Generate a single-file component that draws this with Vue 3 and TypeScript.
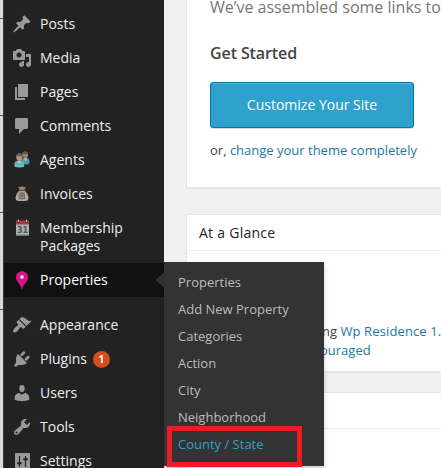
<script setup lang="ts">
interface MenuItem {
  label: string
  icon: string
  badge?: number
  current?: boolean
  separated?: boolean
  tall?: boolean
}

const menu: MenuItem[] = [
  { label: 'Posts', icon: 'pin' },
  { label: 'Media', icon: 'media' },
  { label: 'Pages', icon: 'pages' },
  { label: 'Comments', icon: 'comment' },
  { label: 'Agents', icon: 'agents' },
  { label: 'Invoices', icon: 'bag' },
  { label: 'Membership Packages', icon: 'calendar', tall: true },
  { label: 'Properties', icon: 'marker', current: true },
  { label: 'Appearance', icon: 'brush', separated: true },
  { label: 'Plugins', icon: 'plug', badge: 1 },
  { label: 'Users', icon: 'user' },
  { label: 'Tools', icon: 'wrench' },
  { label: 'Settings', icon: 'sliders' },
]

const submenu: string[] = [
  'Properties',
  'Add New Property',
  'Categories',
  'Action',
  'City',
  'Neighborhood',
  'County / State',
]
</script>

<template>
  <div class="screen">
    <div class="edge"><i v-for="n in 4" :key="n"></i></div>
    <nav class="sidebar">
      <a
        v-for="item in menu"
        :key="item.label"
        class="item"
        :class="{ current: item.current, separated: item.separated, tall: item.tall }"
      >
        <svg class="icon" viewBox="0 0 20 20" width="20" height="20">
          <path v-if="item.icon === 'pin'" d="M10.44 3.02l1.82-1.82 6.36 6.35-1.83 1.82c-1.05-.68-2.48-.57-3.41.36l-.75.75c-.92.93-1.04 2.35-.35 3.41l-1.83 1.82-2.41-2.41-2.8 2.79c-.42.42-3.38 2.71-3.8 2.29s1.86-3.39 2.28-3.81l2.79-2.79L4.1 9.36l1.83-1.82c1.05.69 2.48.57 3.4-.36l.75-.75c.93-.92 1.05-2.35.36-3.41z" />
          <path v-else-if="item.icon === 'media'" fill-rule="evenodd" d="M13 11V4c0-.55-.45-1-1-1h-1.67L9 1H5L3.67 3H2c-.55 0-1 .45-1 1v7c0 .55.45 1 1 1h10c.55 0 1-.45 1-1zM7 4.5c1.380 0 2.500 1.120 2.500 2.500S8.380 9.500 7 9.500 4.500 8.380 4.500 7 5.620 4.500 7 4.500zM14 6h5v10.500c0 1.380-1.120 2.500-2.500 2.500S14 17.880 14 16.500s1.120-2.500 2.500-2.500c.170 0 .340.020.500.050V9h-3V6zm-4 8.050V13h2v3.500c0 1.380-1.120 2.500-2.500 2.500S7 17.880 7 16.500 8.120 14 9.500 14c.170 0 .340.020.500.050z" />
          <path v-else-if="item.icon === 'pages'" d="M6 15V2h10v13H6zm-1 1h8v2H3V5h2v11z" />
          <path v-else-if="item.icon === 'comment'" d="M4.500 2h10c.900 0 1.500.600 1.500 1.500v8c0 .900-.600 1.500-1.500 1.500H12l-5 5v-5H4.500C3.600 13 3 12.400 3 11.500v-8C3 2.600 3.600 2 4.500 2z" />
          <g v-else-if="item.icon === 'agents'">
            <path d="M9.500 12c0-3 1.500-4.300 4-4.300s4 1.300 4 4.300c0 2-1 2.500-4 2.500z" fill="#4f9db3" />
            <path d="M12 8.500l1.500 3 1.500-3z" fill="#b5c3c5" />
            <ellipse cx="13.200" cy="4.800" rx="2.900" ry="3.300" fill="#9d8469" />
            <path d="M10.200 4.300C10.500 1 15.800.500 16.200 4.200c-2 .2-4-.8-6 .1z" fill="#685343" />
            <path d="M2.300 15c0-3.300 1.700-4.600 5-4.600s5.200 1.300 5.200 4.600c0 1.900-1.500 2.400-5.100 2.400S2.300 16.900 2.300 15z" fill="#69b0c2" />
            <path d="M5.700 10.800l1.700 3.200 1.800-3.200z" fill="#c5cccb" />
            <path d="M3 15.700c1.500 1.200 7.500 1.200 9 0" fill="none" stroke="#91cad5" stroke-width=".8" />
            <ellipse cx="7.400" cy="7.200" rx="3.100" ry="3.700" fill="#ad967c" />
            <path d="M4.200 6.600C4.300 2.600 10.500 2.200 10.700 6.700 8 6.400 6.200 5.500 4.200 6.600z" fill="#755d4b" />
          </g>
          <g v-else-if="item.icon === 'bag'">
            <path d="M8 6.500L6 2.500l2.300.700L10 2l1.700 1.300 2.300-.6-2 3.800z" fill="#9b8370" />
            <path d="M7.500 6.300h5c2 2 4.300 5.400 4 8-.200 2.200-1.400 2.700-3.500 2.700H7c-2.300 0-3.400-.700-3.500-2.700-.100-2.700 2-6 4-8z" fill="#b3a79a" />
            <path d="M7 6.400h6" stroke="#76513a" stroke-width="1.500" />
            <path d="M7.500 9.500h5M6.500 11.700h7M6.500 14h7M8 8.500v7M10 8v8M12 8.500v7" stroke="#51473f" stroke-width=".9" stroke-dasharray="1.200 .6" />
          </g>
          <g v-else-if="item.icon === 'calendar'">
            <path d="M4 3h13v14.500H4z" fill="#a9b2b2" />
            <path d="M4 2.500h13v4H4z" fill="#a53e3b" />
            <path d="M6.500 1.500v2.500M14.500 1.500v2.500" stroke="#c0b6b5" stroke-width="1" />
            <path d="M5.500 4.500h2M13.500 4.500h2" stroke="#4c2928" />
            <path d="M4 17h13" stroke="#727b7b" />
            <text x="10.500" y="14.800" text-anchor="middle" class="date">31</text>
          </g>
          <g v-else-if="item.icon === 'marker'">
            <path d="M10 1.300c3.600 0 6 2.600 6 5.900 0 4.400-4.500 6.300-5.700 12h-.6C8.500 13.500 4 11.600 4 7.200c0-3.300 2.400-5.900 6-5.900z" fill="#d31687" />
            <circle cx="10" cy="7" r="1.700" fill="#fff" />
          </g>
          <path v-else-if="item.icon === 'brush'" d="M14.480 11.060L7.410 3.990l1.500-1.500c.500-.560 2.300-.470 3.510.320 1.210.800 1.430 1.280 2.910 2.100 1.180.640 2.450 1.260 4.450.850zm-.710.710L6.700 4.700 4.930 6.470c-.390.390-.390 1.020 0 1.410l1.060 1.060c.390.390.390 1.030 0 1.420-.600.600-1.430 1.110-2.210 1.690-.350.260-.700.530-1.010.840C1.430 14.230.400 16.080 1.400 17.070c.990 1 2.840-.030 4.180-1.360.310-.310.580-.660.850-1.020.570-.780 1.080-1.610 1.690-2.210.390-.390 1.020-.390 1.410 0l1.060 1.060c.390.390 1.020.390 1.410 0z" />
          <path v-else-if="item.icon === 'plug'" d="M13.110 4.360L9.870 7.600 8 5.730l3.240-3.240c.350-.340 1.050-.200 1.560.320.520.510.660 1.210.310 1.550zm-8 1.770l.910-1.120 9.010 9.010-1.190.840c-.710.710-2.630 1.160-3.820 1.160H6.140L4.900 17.260c-.590.590-1.540.590-2.120 0-.590-.580-.590-1.530 0-2.120l1.240-1.240v-3.880c0-1.130.400-3.190 1.090-3.890zm7.260 3.970l3.240-3.240c.340-.350 1.040-.210 1.550.310.520.510.660 1.210.310 1.550l-3.240 3.250z" />
          <path v-else-if="item.icon === 'user'" d="M10 9.250c-2.270 0-2.730-3.440-2.730-3.440C7 4.020 7.820 2 9.970 2c2.160 0 2.980 2.020 2.710 3.810 0 0-.410 3.440-2.680 3.440zm0 2.570L12.720 10c2.390 0 4.520 2.330 4.520 4.530v2.490s-3.650 1.130-7.240 1.130c-3.650 0-7.240-1.130-7.240-1.130v-2.490c0-2.250 1.940-4.480 4.470-4.480z" />
          <path v-else-if="item.icon === 'wrench'" fill-rule="evenodd" d="M16.680 9.770c-1.340 1.340-3.300 1.670-4.950.990l-5.410 6.520c-.990.990-2.590.990-3.580 0s-.990-2.590 0-3.570l6.520-5.420c-.680-1.650-.350-3.610.990-4.950 1.280-1.280 3.120-1.620 4.720-1.060l-2.890 2.890 2.820 2.820 2.860-2.870c.530 1.580.180 3.390-1.080 4.650zM3.810 16.210c.400.390 1.040.390 1.430 0 .400-.400.400-1.040 0-1.430-.390-.400-1.030-.400-1.430 0-.390.390-.390 1.030 0 1.430z" />
          <g v-else>
            <rect x="3" y="2" width="15" height="16" rx="1" />
            <path d="M7.500 5v11M13.500 5v11" stroke="#222" stroke-width="1.200" />
            <path d="M5.200 12.200h4.600M11.200 8.200h4.600" stroke="#222" stroke-width="2" />
          </g>
        </svg>
        <span class="label">{{ item.label }}</span>
        <span v-if="item.badge" class="badge">{{ item.badge }}</span>
      </a>
    </nav>

    <main class="content">
      <section class="panel welcome">
        <p class="about">We’ve assembled some links to</p>
        <h3 class="start">Get Started</h3>
        <button class="primary">Customize Your Site</button>
        <p class="alt">or, <a>change your theme completely</a></p>
      </section>
      <section class="panel glance">
        <h3 class="heading">At a Glance</h3>
        <div class="details">
          <p class="theme">ng <a>Wp Residence 1.0</a></p>
          <p class="search"><a>ouraged</a></p>
        </div>
      </section>
      <section class="panel activity"><h3 class="heading"></h3></section>
    </main>

    <div class="flyout">
      <a v-for="entry in submenu" :key="entry" :class="{ active: entry === 'County / State' }">{{ entry }}</a>
    </div>
    <div class="highlight"></div>
  </div>
</template>

<style>
body {
  overflow: hidden;
}
</style>

<style scoped>
.screen {
  position: relative;
  display: flex;
  width: 441px;
  height: 468px;
  overflow: hidden;
  background: #f1f1f1;
  color: #444;
  font: 13px/18px "Open Sans", "Noto Sans", sans-serif;
}
p, h3 {
  margin: 0;
  white-space: nowrap;
}
a {
  color: #2178a5;
}
.edge {
  flex: 0 0 3px;
  padding-top: 18px;
  background: #d9d9d9;
  border-right: 1px solid #383838;
}
.edge i {
  display: block;
  height: 96px;
  border-top: 1px solid #555;
}
.sidebar {
  flex: 0 0 160px;
  box-sizing: border-box;
  padding-top: 7px;
  background: #222;
}
.item {
  position: relative;
  display: flex;
  box-sizing: border-box;
  height: 34px;
  padding: 8px 0 0 8px;
  color: #eee;
  font-size: 14px;
}
.item.tall {
  height: 52px;
}
.item.current {
  background: #111;
  color: #fff;
}
.item.separated {
  margin-top: 11px;
}
.item.current::after {
  content: "";
  position: absolute;
  right: 0;
  top: 9px;
  border: 8px solid transparent;
  border-left: 0;
  border-right-color: #333;
}
.icon {
  flex: none;
  margin-top: -1px;
  fill: #999;
}
.date {
  font: bold 8px "DejaVu Sans", sans-serif;
  fill: #4c5557;
}
.label {
  margin-left: 8px;
  max-width: 110px;
}
.badge {
  width: 17px;
  height: 17px;
  margin: 1px 0 0 6px;
  border-radius: 50%;
  background: #d54e21;
  color: #fff;
  font-size: 10px;
  font-weight: 700;
  line-height: 17px;
  text-align: center;
}
.content {
  flex: none;
  width: 300px;
  padding-left: 22px;
}
.panel {
  box-sizing: border-box;
  background: #fff;
  border: 1px solid #e5e5e5;
  box-shadow: 0 1px 1px rgba(0, 0, 0, .04);
}
.welcome {
  height: 188px;
  padding-left: 23px;
  border-top: 0;
}
.about {
  height: 42px;
  color: #777;
  font-size: 16px;
  line-height: 14px;
}
.start {
  height: 40px;
  font-size: 16px;
  font-weight: 600;
  letter-spacing: -.1px;
  line-height: 22px;
}
.primary {
  display: block;
  box-sizing: border-box;
  width: 204px;
  height: 46px;
  padding: 0;
  border: 1px solid #0074a2;
  border-radius: 3px;
  background: #2ea2cc;
  box-shadow: inset 0 1px 0 rgba(120, 200, 230, .5), 0 1px 0 rgba(0, 0, 0, .15);
  color: #fff;
  font: 14px/44px "Open Sans", "Noto Sans", sans-serif;
}
.alt {
  margin-top: 13px;
}
.glance {
  height: 158px;
  margin-top: 26px;
}
.heading {
  height: 35px;
  padding-left: 12px;
  border-bottom: 1px solid #eee;
  color: #222;
  font-size: 14px;
  font-weight: 400;
  letter-spacing: .26px;
  line-height: 36px;
}
.details {
  padding: 71px 0 0 135px;
  line-height: 19px;
}
.theme a {
  letter-spacing: .12px;
}
.search {
  margin-left: -2px;
}
.activity {
  height: 100px;
  margin-top: 20px;
}
.flyout {
  position: absolute;
  left: 164px;
  top: 262px;
  box-sizing: border-box;
  width: 160px;
  height: 204px;
  padding-top: 7px;
  background: #333;
  box-shadow: 0 3px 5px rgba(0, 0, 0, .2);
}
.flyout a {
  display: block;
  height: 27px;
  padding-left: 14px;
  color: #bbb;
  line-height: 27px;
}
.flyout .active {
  color: #2ea2cc;
}
.highlight {
  position: absolute;
  left: 167px;
  top: 426px;
  box-sizing: border-box;
  width: 135px;
  height: 41px;
  border: 5px solid #ed1c24;
}
</style>
